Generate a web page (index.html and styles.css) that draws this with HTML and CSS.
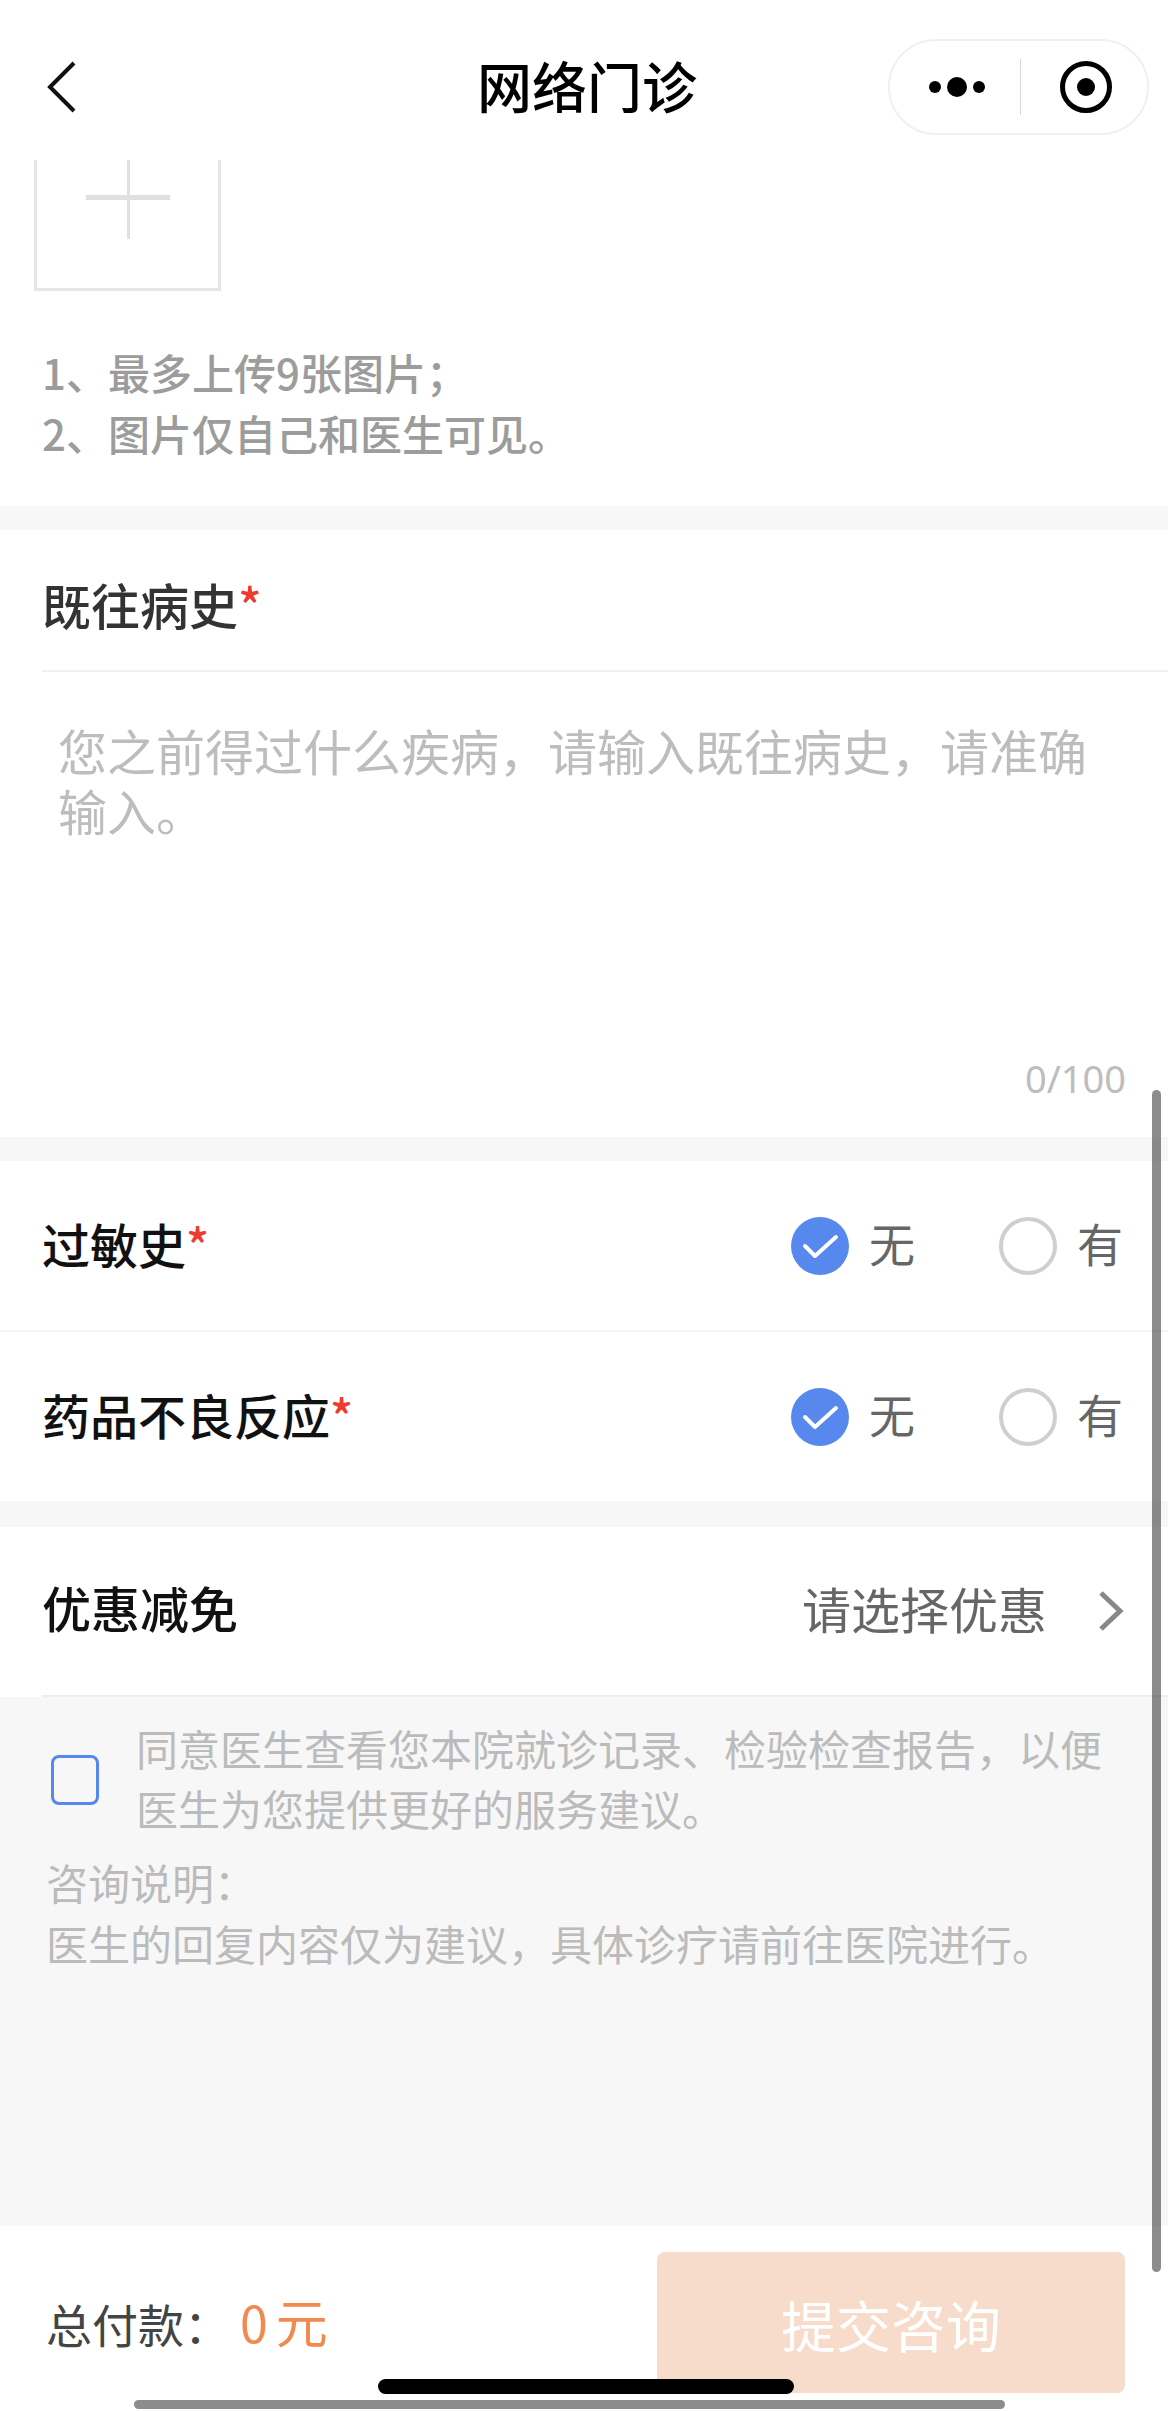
FILE: index.html
```html
<!DOCTYPE html>
<html lang="zh-CN">
<head>
    <meta charset="UTF-8">
    <meta name="viewport" content="width=device-width, initial-scale=1.0">
    <title>网络门诊</title>
    <link rel="stylesheet" href="styles.css">
</head>
<body>
    <header class="nav">
        <svg class="nav-back" width="30" height="52" viewBox="0 0 30 52"><path d="M27 2 L3 26 L27 50" fill="none" stroke="#111" stroke-width="4"/></svg>
        <h1 class="nav-title">网络门诊</h1>
        <div class="capsule">
            <svg class="capsule-more" width="60" height="24" viewBox="0 0 60 24"><circle cx="8" cy="12" r="6"/><circle cx="30" cy="12" r="10"/><circle cx="52" cy="12" r="6"/></svg>
            <span class="capsule-line"></span>
            <svg class="capsule-target" width="60" height="60" viewBox="0 0 60 60"><circle cx="30" cy="30" r="23.5" fill="none" stroke="#000" stroke-width="5"/><circle cx="30" cy="30" r="9"/></svg>
        </div>
    </header>

    <section class="upload">
        <div class="upload-box">
            <span class="plus-h"></span>
            <span class="plus-v"></span>
        </div>
        <p class="upload-tip">1、最多上传9张图片；<br>2、图片仅自己和医生可见。</p>
    </section>

    <section class="history">
        <h2 class="history-title">既往病史<em>*</em></h2>
        <p class="history-input">您之前得过什么疾病，请输入既往病史，请准确输入。</p>
        <p class="history-count">0/100</p>
    </section>

    <section class="choices">
        <div class="row row-line">
            <h2 class="row-title">过敏史<em>*</em></h2>
            <div class="radios">
                <span class="radio radio-on"><svg width="58" height="58" viewBox="0 0 58 58"><path d="M14 29 L24 39 L45 20" fill="none" stroke="#fff" stroke-width="4" stroke-linecap="round" stroke-linejoin="round"/></svg></span>
                <span class="radio-label">无</span>
                <span class="radio"></span>
                <span class="radio-label">有</span>
            </div>
        </div>
        <div class="row">
            <h2 class="row-title">药品不良反应<em>*</em></h2>
            <div class="radios">
                <span class="radio radio-on"><svg width="58" height="58" viewBox="0 0 58 58"><path d="M14 29 L24 39 L45 20" fill="none" stroke="#fff" stroke-width="4" stroke-linecap="round" stroke-linejoin="round"/></svg></span>
                <span class="radio-label">无</span>
                <span class="radio"></span>
                <span class="radio-label">有</span>
            </div>
        </div>
    </section>

    <section class="discount">
        <div class="discount-row">
            <h2 class="row-title">优惠减免</h2>
            <span class="discount-value">请选择优惠</span>
            <svg class="discount-arrow" width="28" height="42" viewBox="0 0 28 42"><path d="M4 3 L23 21 L4 39" fill="none" stroke="#888" stroke-width="5"/></svg>
        </div>
    </section>

    <section class="notes">
        <div class="agree">
            <span class="agree-box"></span>
            <p class="agree-text">同意医生查看您本院就诊记录、检验检查报告，以便医生为您提供更好的服务建议。</p>
        </div>
        <p class="notes-text">咨询说明：<br>医生的回复内容仅为建议，具体诊疗请前往医院进行。</p>
    </section>

    <footer class="bottom">
        <div class="total">总付款：<span class="total-num"><b>0</b>元</span></div>
        <button class="submit">提交咨询</button>
    </footer>

    <div class="scroll-v"></div>
    <div class="scroll-h"></div>
    <div class="home-bar"></div>
</body>
</html>
```

FILE: styles.css
```css
html {
    height: 2411px;
    overflow: hidden;
}
body {
    font-family: "Noto Sans CJK SC", "Liberation Sans", sans-serif;
    background-color: #f7f7f7;
    margin: 0;
    height: 2411px;
    position: relative;
    display: flex;
    flex-direction: column;
}
h1, h2, p {
    margin: 0;
}
em {
    color: #ee3b2f;
    font-style: normal;
}
.nav {
    display: grid;
    grid-template-columns: 1fr auto 1fr;
    align-items: center;
    height: 160px;
    padding: 14px 19px 0 47px;
    background-color: #fff;
    box-sizing: border-box;
}
.nav-back {
    margin-top: -1px;
}
.nav-title {
    font-size: 55px;
    font-weight: 500;
    line-height: 60px;
    color: #000;
    margin-top: -6px;
    margin-left: -22px;
}
.capsule {
    justify-self: end;
    display: flex;
    align-items: center;
    width: 261px;
    height: 96px;
    border: 2px solid #f0f0f0;
    border-radius: 48px;
    box-sizing: border-box;
}
.capsule-more {
    margin-left: 37px;
}
.capsule-line {
    width: 1px;
    height: 56px;
    margin-left: 33px;
    background-color: #d8d8d8;
}
.capsule-target {
    margin-left: 35px;
}
.upload {
    height: 346px;
    padding: 0 0 0 34px;
    background-color: #fff;
    box-sizing: border-box;
}
.upload-box {
    position: relative;
    width: 187px;
    height: 131px;
    border: 3px solid #e6e6e6;
    border-top: none;
    box-sizing: border-box;
}
.plus-h {
    position: absolute;
    left: 49px;
    top: 35px;
    width: 84px;
    height: 5px;
    background-color: #e0e0e0;
}
.plus-v {
    position: absolute;
    left: 90px;
    top: 0;
    width: 3px;
    height: 79px;
    background-color: #e0e0e0;
}
.upload-tip {
    margin: 50px 0 0 8px;
    font-size: 42px;
    font-weight: 500;
    line-height: 61px;
    color: #9c9c9c;
}
.history {
    position: relative;
    height: 607px;
    margin-top: 24px;
    background-color: #fff;
}
.history-title {
    margin-left: 42px;
    height: 142px;
    border-bottom: 2px solid #f0f0f0;
    box-sizing: border-box;
    font-size: 49px;
    font-weight: 500;
    line-height: 148px;
    color: #333;
}
.history-input {
    padding: 48px 58px 0;
    font-size: 49px;
    line-height: 60px;
    color: #bdbdbd;
}
.history-count {
    position: absolute;
    right: 42px;
    bottom: 37px;
    font-family: "Noto Sans", sans-serif;
    font-size: 38px;
    line-height: 44px;
    color: #bdbdbd;
}
.choices {
    margin-top: 24px;
    background-color: #fff;
}
.row {
    display: flex;
    align-items: center;
    justify-content: space-between;
    height: 169px;
    padding: 0 45px 0 42px;
    box-sizing: border-box;
}
.row-line {
    height: 171px;
    border-bottom: 2px solid #f4f4f4;
}
.row-title {
    font-size: 48px;
    font-weight: 500;
    line-height: 60px;
    color: #111;
    margin-top: -5px;
}
.radios {
    display: flex;
    align-items: center;
}
.radio {
    width: 58px;
    height: 58px;
    border: 4px solid #cfcfcf;
    border-radius: 50%;
    box-sizing: border-box;
}
.radio-on {
    border: none;
    background-color: #5688ee;
    margin-left: -2px;
}
.radio svg {
    display: block;
}
.radio-label {
    margin-top: -8px;
    margin-left: 20px;
    margin-right: 84px;
    font-size: 46px;
    line-height: 58px;
    color: #666;
}
.radio-label:last-child {
    margin-right: 0;
}
.discount {
    margin-top: 26px;
    height: 170px;
    padding-left: 42px;
    background-color: #fff;
}
.discount-row {
    display: flex;
    align-items: center;
    height: 170px;
    padding-right: 43px;
    border-bottom: 2px solid #eee;
    box-sizing: border-box;
}
.discount-row .row-title {
    font-size: 49px;
    margin-top: -8px;
}
.discount-value {
    margin-left: auto;
    margin-right: 50px;
    margin-top: -6px;
    font-size: 49px;
    line-height: 60px;
    color: #666;
}
.notes {
    flex: 1;
    padding: 21px 50px 0 47px;
}
.agree {
    display: flex;
    align-items: center;
}
.agree-box {
    flex: none;
    width: 48px;
    height: 50px;
    margin-left: 4px;
    margin-top: 4px;
    border: 3px solid #5688ee;
    border-radius: 8px;
    box-sizing: border-box;
}
.agree-text {
    margin-left: 37px;
    font-size: 42px;
    line-height: 60px;
    color: #bbb;
}
.notes-text {
    margin-top: 13px;
    margin-left: -1px;
    font-size: 42px;
    line-height: 61px;
    color: #bbb;
}
.bottom {
    display: flex;
    align-items: flex-start;
    justify-content: space-between;
    height: 185px;
    padding: 26px 43px 0 46px;
    background-color: #fff;
    box-sizing: border-box;
}
.total {
    margin-top: 39px;
    font-size: 46px;
    line-height: 60px;
    color: #444;
}
.total-num {
    margin-left: 10px;
    font-size: 52px;
    color: #f2894e;
}
.total-num b {
    font-weight: 400;
    font-size: 50px;
    margin-right: 8px;
}
.submit {
    width: 468px;
    height: 141px;
    border: none;
    border-radius: 8px;
    background-color: #f8dccb;
    font-family: inherit;
    font-size: 55px;
    color: #fff;
}
.scroll-v {
    position: absolute;
    left: 1152px;
    top: 1090px;
    width: 9px;
    height: 1182px;
    border-radius: 5px;
    background-color: rgba(0, 0, 0, 0.45);
}
.scroll-h {
    position: absolute;
    left: 134px;
    top: 2400px;
    width: 871px;
    height: 9px;
    border-radius: 5px;
    background-color: rgba(0, 0, 0, 0.45);
}
.home-bar {
    position: absolute;
    left: 378px;
    top: 2379px;
    width: 416px;
    height: 15px;
    border-radius: 8px;
    background-color: #000;
}
```
